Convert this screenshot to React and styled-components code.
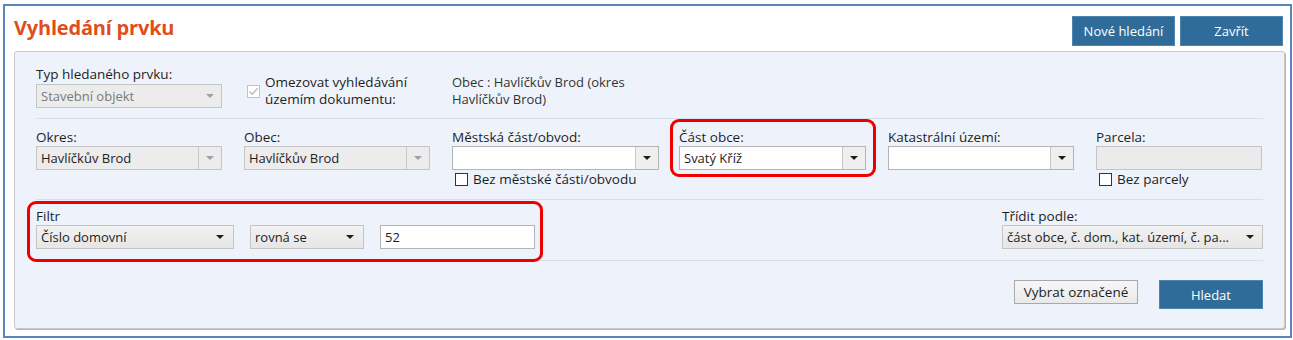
import React from 'react';
import styled, { createGlobalStyle } from 'styled-components';

const GlobalStyle = createGlobalStyle`
  body {
    margin: 0;
    background: #ffffff;
    font-family: "Open Sans", "Noto Sans", sans-serif;
    color: #1e1e1e;
  }
`;

const Frame = styled.div`
  box-sizing: border-box;
  margin: 4px 0 0 3px;
  width: 1289px;
  height: 334px;
  border: 2px solid #5a85bf;
  display: flex;
  flex-direction: column;
`;

const Header = styled.div`
  height: 45px;
  display: flex;
  justify-content: space-between;
  align-items: flex-start;
  padding: 10px 7px 0 9px;
  box-sizing: border-box;
`;

const Title = styled.h1`
  margin: -2px 0 0 0;
  font-size: 20px;
  line-height: 27px;
  font-weight: 700;
  color: #e04e1b;
  letter-spacing: -0.2px;
`;

const ButtonGroup = styled.div`
  display: flex;
  gap: 5px;
`;

const PrimaryButton = styled.button`
  box-sizing: border-box;
  width: ${p => p.$width || 103}px;
  height: ${p => p.$height || 30}px;
  background: #306c9a;
  border: 1px solid #4f84ad;
  color: #ffffff;
  font-family: inherit;
  font-size: 13px;
  padding: 0;
`;

const SecondaryButton = styled.button`
  box-sizing: border-box;
  width: 124px;
  height: 24px;
  background: linear-gradient(#f7f7f7, #e9e9e9);
  border: 1px solid #a8a8a8;
  color: #1e1e1e;
  font-family: inherit;
  font-size: 13.5px;
  padding: 0;
`;

const Panel = styled.div`
  flex: 1;
  margin: 0 5px 7px 9px;
  background: #eef3fb;
  border: 1px solid #c8c8c8;
  border-radius: 3px;
  box-shadow: 1px 1px 0 #b5b5b5;
  padding: 13px 21px 0 21px;
  box-sizing: border-box;
`;

const Row = styled.div`
  display: flex;
  align-items: ${p => p.$align || 'flex-start'};
  gap: ${p => p.$gap ?? 22}px;
  justify-content: ${p => p.$justify || 'flex-start'};
  padding-top: ${p => p.$top || 0}px;
`;

const Divider = styled.div`
  height: 1px;
  background: #d9dfe8;
  margin: ${p => p.$before}px 0 0 0;
`;

const Field = styled.div`
  width: ${p => p.$width}px;
  display: flex;
  flex-direction: column;
  position: relative;
`;

const Highlight = styled.div`
  position: relative;
  margin-left: ${p => p.$shift || 0}px;
  &::after {
    content: '';
    position: absolute;
    top: ${p => p.$inset[0]}px;
    right: ${p => p.$inset[1]}px;
    bottom: ${p => p.$inset[2]}px;
    left: ${p => p.$inset[3]}px;
    border: 3px solid #ee0000;
    border-radius: 9px;
    pointer-events: none;
  }
`;

const Label = styled.div`
  font-size: 13.5px;
  line-height: 18px;
  margin-bottom: ${p => p.$gapBelow || 0}px;
  color: #1e1e1e;
  white-space: nowrap;
`;

const SelectBox = styled.div`
  box-sizing: border-box;
  width: ${p => p.$width ? `${p.$width}px` : '100%'};
  height: 24px;
  display: flex;
  align-items: stretch;
  border: 1px solid ${p => p.$variant === 'input' ? '#b4b4b4' : '#c4c4c4'};
  background: ${p => p.$variant === 'input' ? '#ffffff' : p.$variant === 'plain' ? 'linear-gradient(#f2f2f2, #e6e6e6)' : '#ececec'};
`;

const SelectText = styled.div`
  flex: 1;
  padding-left: 4px;
  font-size: 13px;
  line-height: 22px;
  color: ${p => p.$muted ? '#7a7a7a' : '#1e1e1e'};
  white-space: nowrap;
  overflow: hidden;
`;

const ArrowCell = styled.div`
  width: ${p => p.$cell || 22}px;
  display: flex;
  align-items: center;
  justify-content: center;
  border-left: ${p => p.$split ? '1px solid #c8c8c8' : 'none'};
  background: ${p => p.$variant === 'input' ? '#efefef' : 'transparent'};
`;

const Caret = styled.span`
  width: 0;
  height: 0;
  border-left: 4px solid transparent;
  border-right: 4px solid transparent;
  border-top: 4px solid ${p => p.$muted ? '#a0a0a0' : '#1e1e1e'};
`;

const TextInput = styled.div`
  box-sizing: border-box;
  width: ${p => p.$width}px;
  height: 24px;
  border: 1px solid ${p => p.$disabled ? '#c4c4c4' : '#b4b4b4'};
  background: ${p => p.$disabled ? '#ebebeb' : '#ffffff'};
  font-size: 13px;
  line-height: 22px;
  padding-left: 4px;
`;

const CheckRow = styled.label`
  display: flex;
  align-items: center;
  gap: 5px;
  margin: ${p => p.$margin || '0'};
  font-size: 13.5px;
  line-height: 15px;
  color: #1e1e1e;
  white-space: nowrap;
`;

const Box = styled.span`
  box-sizing: border-box;
  flex: none;
  width: 13px;
  height: 13px;
  background: #ffffff;
  border: 1px solid ${p => p.$disabled ? '#c2c2c2' : '#333333'};
  display: flex;
  align-items: center;
  justify-content: center;
`;

const TwoLine = styled.div`
  font-size: ${p => p.$size || 13.5}px;
  line-height: 17px;
  color: ${p => p.$color || '#1e1e1e'};
  white-space: nowrap;
`;

const Select = ({ value, variant = 'readonly', muted, split, width, cell }) => (
  <SelectBox $variant={variant} $width={width}>
    <SelectText $muted={muted}>{value}</SelectText>
    <ArrowCell $split={split} $variant={variant} $cell={cell}>
      <Caret $muted={muted || variant === 'readonly'} />
    </ArrowCell>
  </SelectBox>
);

const App = () => (
  <>
    <GlobalStyle />
    <Frame>
      <Header>
        <Title>Vyhledání prvku</Title>
        <ButtonGroup>
          <PrimaryButton>Nové hledání</PrimaryButton>
          <PrimaryButton>Zavřít</PrimaryButton>
        </ButtonGroup>
      </Header>
      <Panel>
        <Row $align="flex-end">
          <Field $width={186}>
            <Label $gapBelow={1}>Typ hledaného prvku:</Label>
            <Select value="Stavební objekt" muted />
          </Field>
          <Field $width={186}>
            <CheckRow $margin="0 0 0 3px">
              <Box $disabled>
                <svg width="11" height="11" viewBox="0 0 11 11">
                  <path d="M1.5 5.5 L4.2 8.3 L9.6 2.2" fill="none" stroke="#b8b8b8" strokeWidth="1.3" />
                </svg>
              </Box>
              <TwoLine>Omezovat vyhledávání<br />územím dokumentu:</TwoLine>
            </CheckRow>
          </Field>
          <Field $width={207}>
            <TwoLine $size={13} $color="#333333">Obec : Havlíčkův Brod (okres<br />Havlíčkův Brod)</TwoLine>
          </Field>
        </Row>

        <Divider $before={10} />

        <Row $top={9}>
          <Field $width={186}>
            <Label>Okres:</Label>
            <Select value="Havlíčkův Brod" split />
          </Field>
          <Field $width={186}>
            <Label>Obec:</Label>
            <Select value="Havlíčkův Brod" split />
          </Field>
          <Field $width={207}>
            <Label>Městská část/obvod:</Label>
            <Select value="" variant="input" split />
            <CheckRow $margin="2px 0 0 3px">
              <Box />
              <span>Bez městské části/obvodu</span>
            </CheckRow>
          </Field>
          <Highlight $inset={[-9, -10, -7, -9]} $shift={-2}>
            <Field $width={187}>
              <Label>Část obce:</Label>
              <Select value="Svatý Kříž" variant="input" split />
            </Field>
          </Highlight>
          <Field $width={186}>
            <Label>Katastrální území:</Label>
            <Select value="" variant="input" split />
          </Field>
          <Field $width={166}>
            <Label>Parcela:</Label>
            <TextInput $width={166} $disabled />
            <CheckRow $margin="2px 0 0 3px">
              <Box />
              <span>Bez parcely</span>
            </CheckRow>
          </Field>
        </Row>

        <Divider $before={12} />

        <Row $top={7} $justify="space-between">
          <Highlight $inset={[-6, -8, -13, -9]}>
            <Field $width={499}>
              <Label>Filtr</Label>
              <Row $gap={16}>
                <Select value="Číslo domovní" variant="plain" width={198} cell={26} />
                <Select value="rovná se" variant="plain" width={114} cell={26} />
                <TextInput $width={155}>52</TextInput>
              </Row>
            </Field>
          </Highlight>
          <Field $width={261}>
            <Label>Třídit podle:</Label>
            <Select value="část obce, č. dom., kat. území, č. pa..." variant="plain" cell={24} />
          </Field>
        </Row>

        <Divider $before={11} />

        <Row $top={19} $gap={21} $justify="flex-end">
          <SecondaryButton>Vybrat označené</SecondaryButton>
          <PrimaryButton $width={104} $height={29}>Hledat</PrimaryButton>
        </Row>
      </Panel>
    </Frame>
  </>
);

export default App;
